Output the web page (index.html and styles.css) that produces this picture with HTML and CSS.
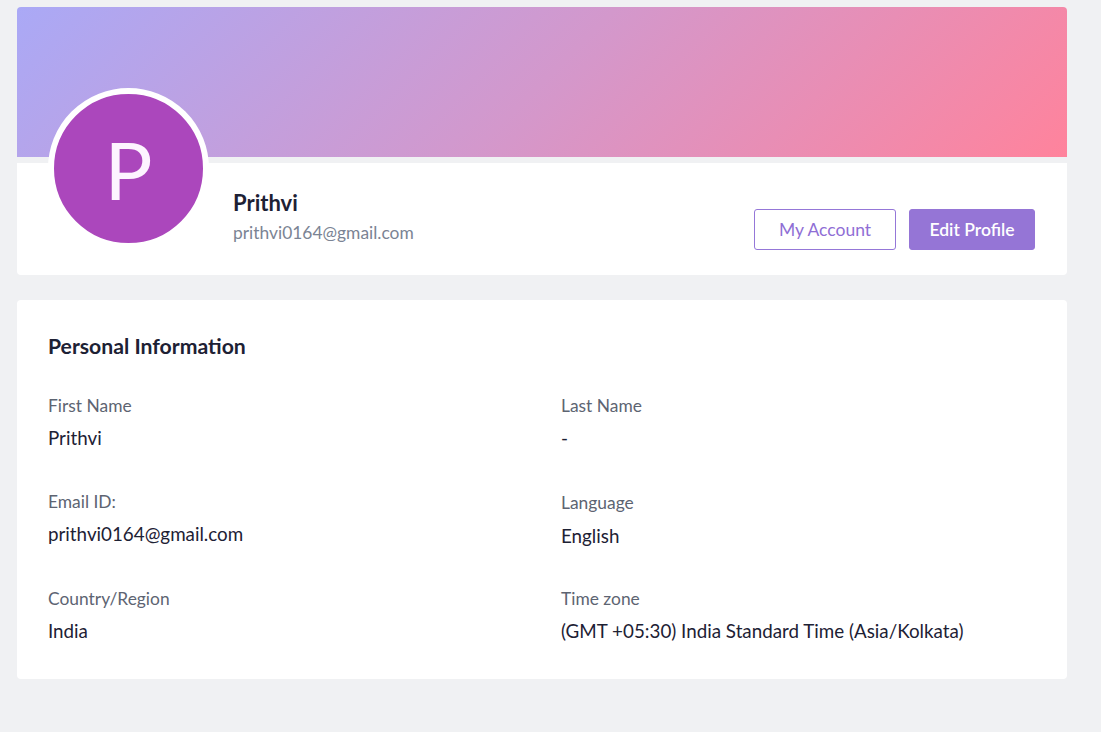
FILE: index.html
```html
<!DOCTYPE html>
<html lang="en">
<head>
<meta charset="utf-8">
<title>Profile</title>
<link rel="stylesheet" href="styles.css">
</head>
<body>
<main class="page">
  <section class="profile-card">
    <div class="banner"></div>
    <div class="profile-body">
      <div class="avatar"><span>P</span></div>
      <div class="identity">
        <div class="name">Prithvi</div>
        <div class="email">prithvi0164@gmail.com</div>
      </div>
      <div class="actions">
        <button class="btn btn-outline">My Account</button>
        <button class="btn btn-solid">Edit Profile</button>
      </div>
    </div>
  </section>

  <section class="info-card">
    <h2 class="info-title">Personal Information</h2>
    <div class="info-grid">
      <div class="field">
        <div class="label">First Name</div>
        <div class="value">Prithvi</div>
      </div>
      <div class="field">
        <div class="label">Last Name</div>
        <div class="value">-</div>
      </div>
      <div class="field">
        <div class="label">Email ID:</div>
        <div class="value">prithvi0164@gmail.com</div>
      </div>
      <div class="field field-shift">
        <div class="label">Language</div>
        <div class="value value-shift">English</div>
      </div>
      <div class="field">
        <div class="label">Country/Region</div>
        <div class="value">India</div>
      </div>
      <div class="field">
        <div class="label">Time zone</div>
        <div class="value">(GMT +05:30) India Standard Time (Asia/Kolkata)</div>
      </div>
    </div>
  </section>
</main>
</body>
</html>
```
FILE: styles.css
```css
* { box-sizing: border-box; }

html, body {
  margin: 0;
  padding: 0;
  background: #f0f1f3;
  font-family: Lato, "Open Sans", sans-serif;
  line-height: 1.2;
}

.page {
  width: 1050px;
  margin-left: 17px;
  padding-top: 7px;
  display: flex;
  flex-direction: column;
  gap: 25px;
}

.profile-card {
  display: flex;
  flex-direction: column;
  gap: 6px;
}

.banner {
  height: 150px;
  border-radius: 4px 4px 0 0;
  background: linear-gradient(135deg, #aaa9f6 0%, #d398cc 50%, #ff839c 100%);
}

.profile-body {
  height: 112px;
  background: #fff;
  border-radius: 0 0 4px 4px;
  display: flex;
  align-items: flex-start;
  padding: 0 32px 0 31px;
}

.avatar {
  width: 161px;
  height: 161px;
  margin-top: -75px;
  border-radius: 50%;
  border: 6px solid #fff;
  background: #ab47bc;
  display: flex;
  align-items: center;
  justify-content: center;
  flex-shrink: 0;
}

.avatar span {
  color: #fdf4ff;
  font-size: 80px;
  line-height: 1;
  margin-top: 1px;
}

.identity {
  margin-left: 24px;
  padding-top: 27px;
  display: flex;
  flex-direction: column;
  gap: 7px;
}

.name {
  font-size: 22px;
  font-weight: 700;
  color: #1d2134;
}

.email {
  font-size: 17.4px;
  color: #7b8494;
}

.actions {
  margin-left: auto;
  padding-top: 46px;
  display: flex;
  gap: 13px;
}

.btn {
  height: 41px;
  border-radius: 3px;
  font-family: Lato, "Open Sans", sans-serif;
  font-size: 17.5px;
  cursor: pointer;
  padding: 0;
}

.btn-outline {
  width: 142px;
  background: #fff;
  border: 1px solid #9577d8;
  color: #8f6ed5;
}

.btn-solid {
  width: 126px;
  background: #9575d6;
  border: 1px solid #9575d6;
  color: #fff;
  font-weight: 600;
}

.info-card {
  background: #fff;
  border-radius: 4px;
  padding: 34px 31px 36px;
}

.info-title {
  margin: 0;
  font-size: 21.2px;
  font-weight: 700;
  color: #1d2134;
}

.info-grid {
  margin-top: 37px;
  display: grid;
  grid-template-columns: 513px 1fr;
  row-gap: 42px;
}

.field {
  display: flex;
  flex-direction: column;
  gap: 10px;
}

.label {
  font-size: 17.4px;
  color: #5d6472;
}

.value {
  font-size: 18.8px;
  color: #1d2134;
}

.field-shift .label { margin-top: 1px; }
.value-shift { margin-top: 1px; }
```
